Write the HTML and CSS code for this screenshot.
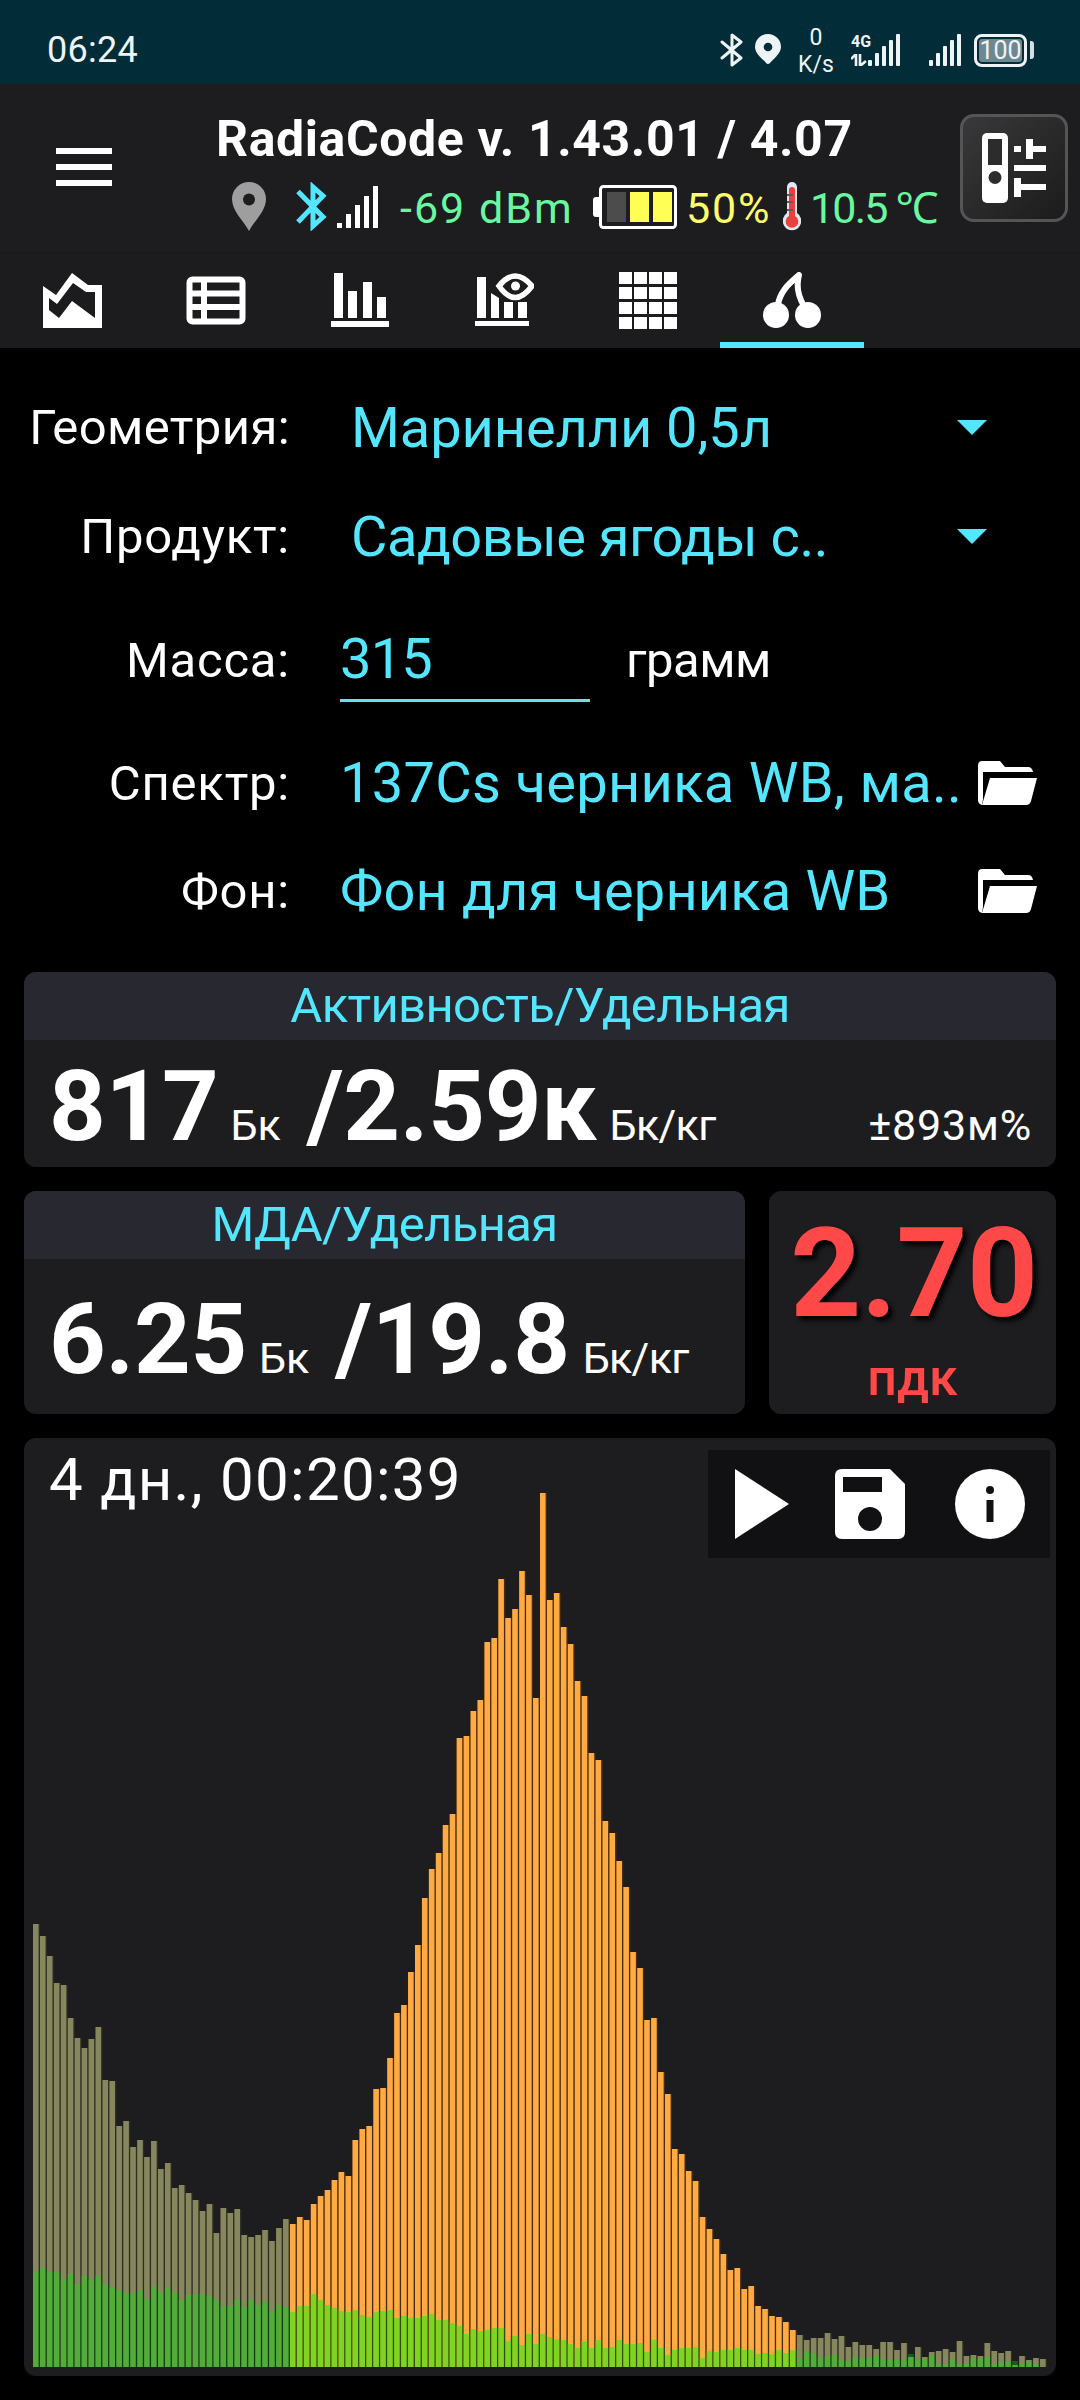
FILE: index.html
```
<!DOCTYPE html>
<html lang="ru">
<head>
  <meta charset="UTF-8">
  <meta name="viewport" content="width=device-width, initial-scale=1.0">
  <title>RadiaCode</title>
  <link rel="stylesheet" href="styles.css">
</head>
<body>

  <!-- Системная строка -->
  <div class="statusbar">
    <span class="clock">06:24</span>
    <div class="status-icons">
      <svg class="st-bt" width="24" height="36" viewBox="0 0 24 36"><path d="M2 10 L21 26 L12 33 V3 L21 10 L2 26" fill="none" stroke="#eef4f6" stroke-width="3" stroke-linejoin="round" stroke-linecap="round"/></svg>
      <svg class="st-pin" width="26" height="30" viewBox="0 0 26 30"><path d="M13 0a13 13 0 0 0-13 13c0 7 9 13 11 16a3 3 0 0 0 4 0c2-3 11-9 11-16a13 13 0 0 0-13-13z" fill="#eef4f6"/><circle cx="13" cy="13" r="4.3" fill="#022c38"/></svg>
      <div class="speed"><span>0</span><span>K/s</span></div>
      <div class="mobile">
        <div class="net"><span>4G</span>
          <svg width="16" height="12" viewBox="0 0 16 12"><path d="M0 5 L5 0 V12 M9 0 V12 L15 7" fill="none" stroke="#eef4f6" stroke-width="2.6"/></svg>
        </div>
        <svg width="33" height="32" viewBox="0 0 33 32" fill="#eef4f6"><rect x="0" y="26" width="4" height="6" rx="1"/><rect x="7" y="19" width="4" height="13" rx="1"/><rect x="14" y="12" width="4" height="20" rx="1"/><rect x="21" y="6" width="4" height="26" rx="1"/><rect x="28" y="0" width="4" height="32" rx="1"/></svg>
      </div>
      <svg class="st-sim" width="33" height="32" viewBox="0 0 33 32" fill="#eef4f6"><rect x="0" y="26" width="4" height="6" rx="1"/><rect x="7" y="19" width="4" height="13" rx="1"/><rect x="14" y="12" width="4" height="20" rx="1"/><rect x="21" y="6" width="4" height="26" rx="1"/><rect x="28" y="0" width="4" height="32" rx="1"/></svg>
      <div class="st-battery"><span>100</span></div>
      <i class="st-cap"></i>
    </div>
  </div>

  <!-- Шапка -->
  <div class="header">
    <div class="burger"><i></i><i></i><i></i></div>
    <div class="header-center">
      <h1>RadiaCode v. 1.43.01 / 4.07</h1>
      <div class="device">
        <svg class="pin" width="34" height="49" viewBox="0 0 34 49"><path d="M17 0a17 17 0 0 0-17 17c0 12 11 21 17 32c6-11 17-20 17-32a17 17 0 0 0-17-17z" fill="#9e9e9e"/><circle cx="17" cy="17.500" r="6" fill="#1d1d1f"/></svg>
        <svg class="bt" width="32" height="49" viewBox="0 0 32 49"><path d="M2 9.500 L27 35 L17 44 V5 L27 14 L2 40" fill="none" stroke="#55e6ff" stroke-width="5"/></svg>
        <svg class="signal" width="41" height="42" viewBox="0 0 41 42" fill="#fff"><rect x="0" y="37" width="5" height="5"/><rect x="9" y="28" width="5" height="14"/><rect x="18" y="19" width="5" height="23"/><rect x="27" y="10" width="5" height="32"/><rect x="36" y="0" width="5" height="42"/></svg>
        <span class="green dbm">-69 dBm</span>
        <svg class="battery" width="84" height="44" viewBox="0 0 84 44"><path d="M6 12 H3 a3 3 0 0 0-3 3 V29 a3 3 0 0 0 3 3 H6z" fill="#fff"/><rect x="7.500" y="1.500" width="75" height="41" rx="3" fill="#1d1d1f" stroke="#fff" stroke-width="3"/><rect x="14" y="7" width="19" height="30" fill="#4c4c4c"/><rect x="37" y="7" width="19" height="30" fill="#ffff55"/><rect x="60" y="7" width="19" height="30" fill="#ffff55"/></svg>
        <span class="yellow pct">50%</span>
        <svg class="thermo" width="18" height="49" viewBox="0 0 18 49"><path d="M9 0a5 5 0 0 0-5 5V31a9.300 9.300 0 1 0 10 0V5a5 5 0 0 0-5-5z" fill="#dde8f0"/><path d="M9 5a3 3 0 0 0-3 3V34a6.300 6.300 0 1 0 6 0V8a3 3 0 0 0-3-3z" fill="#e8423f"/><path d="M4 13h6M4 20h6M4 28h6" stroke="#6d5555" stroke-width="2"/></svg>
        <span class="green temp">10.5 ℃</span>
      </div>
    </div>
    <div class="device-button">
      <svg width="64" height="70" viewBox="0 0 64 70"><rect width="26" height="70" rx="5" fill="#fff"/><rect x="6" y="6" width="14" height="26" fill="#2c2c2d"/><circle cx="13" cy="44.500" r="6.500" fill="#2c2c2d"/><path d="M32 13h7v6h-7zM44 6h7v7h13v6H51v7h-7zM32 32h32v6H32zM32 45h7v6h25v6H39v7h-7z" fill="#fff"/></svg>
    </div>
  </div>

  <!-- Вкладки -->
  <div class="tabs">
    <div class="tab"><svg width="60" height="58" viewBox="0 0 60 58"><path fill-rule="evenodd" d="M1 14L14 23L30 1L46 13H60V56H1zM7 26V38L17 46L30 29L53 46V20H44L31 11L15 32z" fill="#fff"/></svg></div>
    <div class="tab"><svg width="60" height="58" viewBox="0 0 60 58"><rect x="3.500" y="7.500" width="53" height="42" rx="3" fill="none" stroke="#fff" stroke-width="6"/><path d="M18 8V49M3 21.500H57M3 35H57" stroke="#fff" stroke-width="6"/></svg></div>
    <div class="tab"><svg width="60" height="58" viewBox="0 0 60 58" fill="#fff"><rect x="4" y="1" width="9" height="45"/><rect x="18" y="19" width="9" height="27"/><rect x="33" y="10" width="9" height="36"/><rect x="47" y="25" width="9" height="21"/><rect x="1" y="49" width="58" height="6"/></svg></div>
    <div class="tab"><svg width="60" height="58" viewBox="0 0 60 58"><path d="M3 5h9v41H3zM17 21l8 5v20h-8zM30 30h9v16h-9zM44 30h9v16h-9zM1 49h54v5H1z" fill="#fff"/><path d="M25 14Q41-6 58 14Q41 37 25 14z" fill="#1d1d1f" stroke="#fff" stroke-width="5.500"/><circle cx="41.500" cy="14" r="4.500" fill="#fff"/></svg></div>
    <div class="tab"><div class="grid-icon"><i></i><i></i><i></i><i></i><i></i><i></i><i></i><i></i><i></i><i></i><i></i><i></i><i></i><i></i><i></i><i></i></div></div>
    <div class="tab active"><svg width="60" height="58" viewBox="0 0 60 58"><circle cx="14" cy="43" r="13" fill="#fff"/><circle cx="46" cy="43" r="13" fill="#fff"/><path d="M16 32C19 18 27 12 37 3C34 14 36 24 42 34" fill="none" stroke="#fff" stroke-width="6" stroke-linejoin="round"/></svg></div>
  </div>

  <!-- Параметры измерения -->
  <div class="form">
    <div class="row row-geometry">
      <label>Геометрия:</label>
      <div class="select"><span class="t-geometry">Маринелли 0,5л</span><i class="arrow"></i></div>
    </div>
    <div class="row row-product">
      <label>Продукт:</label>
      <div class="select"><span class="t-product">Садовые ягоды с..</span><i class="arrow"></i></div>
    </div>
    <div class="row row-mass">
      <label>Масса:</label>
      <div class="mass"><span>315</span></div>
      <span class="unit">грамм</span>
    </div>
    <div class="row row-spectrum">
      <label>Спектр:</label>
      <div class="file"><span class="t-spectrum">137Cs черника WB, ма..</span></div>
      <svg class="folder" width="60" height="44" viewBox="0 0 60 44" fill="#fff"><path d="M4 0H22L27 6H50Q54 6 55 11H5V38L4 44Q0 43 0 39V5Q0 0 4 0z"/><path d="M12 17H59L53 40Q52 44 48 44H4z"/></svg>
    </div>
    <div class="row row-background">
      <label>Фон:</label>
      <div class="file"><span class="t-background">Фон для черника WB</span></div>
      <svg class="folder" width="60" height="44" viewBox="0 0 60 44" fill="#fff"><path d="M4 0H22L27 6H50Q54 6 55 11H5V38L4 44Q0 43 0 39V5Q0 0 4 0z"/><path d="M12 17H59L53 40Q52 44 48 44H4z"/></svg>
    </div>
  </div>

  <!-- Результаты -->
  <div class="results">
    <div class="card activity">
      <div class="card-title">Активность/Удельная</div>
      <div class="values"><b>817</b><span class="bq">Бк</span><b>/2.59к</b><span class="bqkg">Бк/кг</span><span class="error">±893м%</span></div>
    </div>
    <div class="results-row">
      <div class="card mda">
        <div class="card-title">МДА/Удельная</div>
        <div class="values"><b>6.25</b><span class="bq">Бк</span><b>/19.8</b><span class="bqkg">Бк/кг</span></div>
      </div>
      <div class="card limit">
        <b>2.70</b>
        <span>пдк</span>
      </div>
    </div>

    <!-- Спектр -->
    <div class="card chart">
      <svg id="spectrum" width="1032" height="938" viewBox="0 0 1032 938"></svg>
      <span class="duration">4 дн., 00:20:39</span>
      <div class="tools">
        <svg width="54" height="70" viewBox="0 0 54 70"><path d="M0 0L54 35L0 70z" fill="#fff"/></svg>
        <svg class="save" width="70" height="70" viewBox="0 0 70 70"><path fill-rule="evenodd" d="M7 0H55L70 15V63Q70 70 63 70H7Q0 70 0 63V7Q0 0 7 0zM8 8V23H47V8z" fill="#fff"/><circle cx="35" cy="50" r="12" fill="#111113"/></svg>
        <svg width="70" height="70" viewBox="0 0 70 70"><circle cx="35" cy="35" r="35" fill="#fff"/><circle cx="35" cy="21" r="4" fill="#111113"/><rect x="31.500" y="31" width="7" height="22" fill="#111113"/></svg>
      </div>
    </div>
  </div>

  <script src="chart.js"></script>
</body>
</html>
```
FILE: styles.css
```
* {
  margin: 0;
  padding: 0;
  box-sizing: border-box;
}

body {
  font-family: Roboto, "Noto Sans", sans-serif;
  width: 1080px;
  height: 2400px;
  overflow: hidden;
  background-color: #000;
  color: #fff;
}

svg {
  display: block;
  flex: none;
}

span, b, h1, label {
  white-space: nowrap;
}

/* Системная строка */
.statusbar {
  height: 84px;
  padding: 0 46px 0 47px;
  background-color: #022c38;
  color: #eef4f6;
  display: flex;
  justify-content: space-between;
}

.clock {
  font-size: 36px;
  line-height: 42px;
  letter-spacing: 0.3px;
  margin-top: 29px;
}

.status-icons {
  display: flex;
  align-items: flex-start;
}

.st-bt {
  margin-top: 32px;
}

.st-pin {
  margin: 34px 0 0 11px;
}

.speed {
  width: 36px;
  margin: 24px 0 0 17px;
  display: flex;
  flex-direction: column;
  align-items: center;
  font-size: 23px;
  line-height: 27px;
}

.mobile {
  display: flex;
  margin: 34px 0 0 17px;
}

.net {
  width: 17px;
  font-size: 16px;
  font-weight: bold;
  line-height: 15px;
}

.net svg {
  margin-top: 5px;
}

.st-sim {
  margin: 34px 0 0 28px;
}

.st-battery {
  width: 53px;
  height: 33px;
  margin: 34px 0 0 12px;
  border: 3px solid #eef4f6;
  border-radius: 8px;
  padding: 2px;
}

.st-battery span {
  display: block;
  height: 23px;
  border-radius: 3px;
  background-color: #6f878e;
  text-align: center;
  font-size: 25px;
  line-height: 23px;
}

.st-cap {
  width: 4px;
  height: 18px;
  margin: 41px 0 0 3px;
  border-radius: 0 3px 3px 0;
  background-color: #d5dfe2;
}

/* Шапка */
.header {
  height: 168px;
  padding: 0 12px 0 56px;
  background-color: #1d1d1f;
  display: flex;
}

.burger {
  width: 56px;
  margin-top: 64px;
  display: flex;
  flex-direction: column;
  gap: 10px;
}

.burger i {
  height: 6px;
  background-color: #fff;
}

.header-center {
  flex: 1;
  margin-left: 104px;
}

h1 {
  margin-top: 27px;
  font-size: 50px;
  font-weight: 700;
  line-height: 56px;
  letter-spacing: 0.6px;
}

.device {
  height: 49px;
  display: flex;
  margin: 15px 0 0 16px;
  font-size: 43px;
  line-height: 53px;
}

.signal { margin: 4px 0 0 9px; }
.bt { margin-left: 30px; }
.dbm { width: 174px; margin: 0 19px 0 22px; letter-spacing: 2px; }
.battery { margin-top: 3px; }
.pct { width: 84px; margin-left: 9px; letter-spacing: 1.8px; }
.thermo { margin-left: 13px; }
.temp { margin-left: 9px; letter-spacing: -1.8px; }
.green { color: #69f8a0; }
.yellow { color: #ffff6b; }

.device-button {
  width: 108px;
  height: 108px;
  margin-top: 30px;
  border: 3px solid #555;
  border-radius: 14px;
  background: linear-gradient(135deg, #39393b, #1b1b1b);
  padding: 16px 0 0 19px;
}

/* Вкладки */
.tabs {
  height: 96px;
  background-color: #1c1c1e;
  border-top: 2px solid #1a1a1c;
  display: flex;
}

.tab {
  width: 144px;
  display: flex;
  justify-content: center;
  padding-top: 18px;
}

.tab.active {
  border-bottom: 6px solid #55e6ff;
}

.grid-icon {
  height: 58px;
  display: grid;
  grid-template-columns: repeat(4, 13px);
  grid-template-rows: repeat(4, 12px);
  gap: 3px 2px;
}

.grid-icon i {
  background-color: #fff;
}

/* Параметры измерения */
.form {
  height: 624px;
}

.row {
  display: flex;
  align-items: center;
}

.row label {
  width: 290px;
  text-align: right;
  font-size: 49px;
  letter-spacing: 0.8px;
}

.row-geometry { height: 134px; padding-top: 25px; }
.row-product { height: 109px; }
.row-mass { height: 138px; }
.row-spectrum { height: 108px; }
.row-background { height: 108px; }

.row-geometry label { letter-spacing: 0.4px; }

.select {
  flex: 1;
  margin-left: 61px;
  display: flex;
  align-items: center;
  color: #55e6ff;
  font-size: 56px;
}

.t-geometry { letter-spacing: -0.1px; }
.t-product { letter-spacing: -0.5px; }
.t-spectrum { letter-spacing: 0.3px; }
.t-background { letter-spacing: 0.15px; }

.arrow {
  margin-left: auto;
  margin-right: 93px;
  border: 15px solid transparent;
  border-top-color: #55e6ff;
  border-bottom: none;
}

.mass {
  width: 250px;
  height: 83px;
  margin-left: 50px;
  border-bottom: 3px solid #6fdcec;
  color: #55e6ff;
  font-size: 56px;
  line-height: 80px;
  letter-spacing: -0.8px;
}

.unit {
  margin-left: 36px;
  font-size: 49px;
  letter-spacing: -0.5px;
}

.file {
  width: 638px;
  margin-left: 50px;
  color: #55e6ff;
  font-size: 56px;
}

/* Карточки */
.results {
  padding: 0 24px;
  display: flex;
  flex-direction: column;
  gap: 24px;
}

.card {
  background-color: #1d1d1f;
  border-radius: 12px;
  overflow: hidden;
}

.card-title {
  height: 68px;
  background-color: #282830;
  color: #55e6ff;
  font-size: 49px;
  line-height: 68px;
  letter-spacing: -0.65px;
  text-align: center;
}

.activity {
  height: 195px;
}

.values {
  display: flex;
  align-items: baseline;
  padding: 8px 24px 0 25px;
}

.values b {
  font-size: 99px;
  letter-spacing: -0.3px;
}

.values span {
  font-size: 43px;
}

.values .bq { margin: 0 26px 0 12px; }
.values .bqkg { margin-left: 13px; letter-spacing: -0.7px; }
.values .error { margin-left: auto; letter-spacing: 0.8px; }

.results-row {
  display: flex;
  gap: 24px;
}

.mda {
  width: 721px;
  height: 223px;
}

.mda .values {
  padding-top: 22px;
}

.limit {
  width: 287px;
  color: #ff4848;
  display: flex;
  flex-direction: column;
  align-items: center;
}

.limit b {
  margin: 11px 0 0 3px;
  font-size: 124px;
  line-height: 144px;
  letter-spacing: -0.5px;
  text-shadow: 4px 4px 5px #000;
}

.limit span {
  font-size: 52px;
  font-weight: 500;
  line-height: 56px;
  margin-top: 4px;
}

/* Спектр */
.chart {
  height: 938px;
  position: relative;
}

.duration {
  position: absolute;
  left: 25px;
  top: 9px;
  font-size: 60px;
  line-height: 66px;
  letter-spacing: 1.3px;
}

.tools {
  position: absolute;
  top: 12px;
  right: 6px;
  width: 342px;
  height: 108px;
  padding-left: 27px;
  background-color: #111113;
  display: flex;
  align-items: center;
}

.tools .save {
  margin: 0 50px 0 46px;
}
```
FILE: chart.js
```
// Высота столбцов спектра и фона
const spectrum = [443,431,411,384,382,349,329,319,328,340,287,286,241,246,220,227,210,226,198,204,179,182,174,167,156,163,134,159,154,158,132,130,132,137,126,139,148,
  143,150,147,163,171,177,187,195,191,227,238,241,278,279,309,354,362,395,422,469,498,514,542,553,629,631,656,667,725,729,788,749,758,796,772,669,
  874,767,774,740,723,686,671,614,607,546,534,506,480,415,399,347,349,295,273,218,213,196,186,150,138,128,113,97,99,78,81,61,58,51,50,45,37,
  32,27,29,29,34,28,31,20,25,22,22,18,25,25,17,24,10,20,10,15,16,18,15,26,11,12,11,24,16,14,16,2,11,7,9,8];
const background = [95,99,95,95,88,93,83,91,87,91,83,79,77,74,74,77,68,81,75,80,74,67,72,73,73,71,67,61,61,67,60,67,62,66,55,62,60,
  55,61,61,73,67,62,59,56,55,57,52,50,55,56,57,49,51,49,49,51,53,47,47,44,41,33,38,36,37,39,39,26,31,22,33,23,
  33,30,28,27,23,19,26,19,27,19,20,27,23,23,24,15,27,19,12,17,19,19,20,9,16,15,17,17,19,17,17,13,14,13,17,14,17,
  9,16,14,9,11,12,7,6,10,9,9,12,8,7,7,7,13,7,8,12,3,3,8,3,4,9,8,10,3,6,6,6,4,6,3,0];

const peakStart = 37;
const peakEnd = 109;
const step = 6.945;
const base = 929;

function rect(x, height, width, color) {
  return `<rect x="${x}" y="${base - height}" width="${width}" height="${height}" fill="${color}"/>`;
}

let bars = "";
spectrum.forEach((value, i) => {
  const x = (9 + i * step).toFixed(2);
  const peak = i >= peakStart && i <= peakEnd;
  const back = background[i];
  bars += rect(x, value, step, peak ? "#4a2c0c" : "#2e2e1f");
  bars += rect(x, value, 5.6, peak ? "#ffaa43" : "#87875f");
  if (back > value) {
    bars += rect(x, back, 5.6, "#13601a");
  }
  bars += rect(x, Math.min(back, value), step, peak ? "#2e5010" : "#123f10");
  bars += rect(x, Math.min(back, value), 5.6, peak ? "#80d421" : "#53ab3b");
});
document.getElementById("spectrum").innerHTML = bars;
```
